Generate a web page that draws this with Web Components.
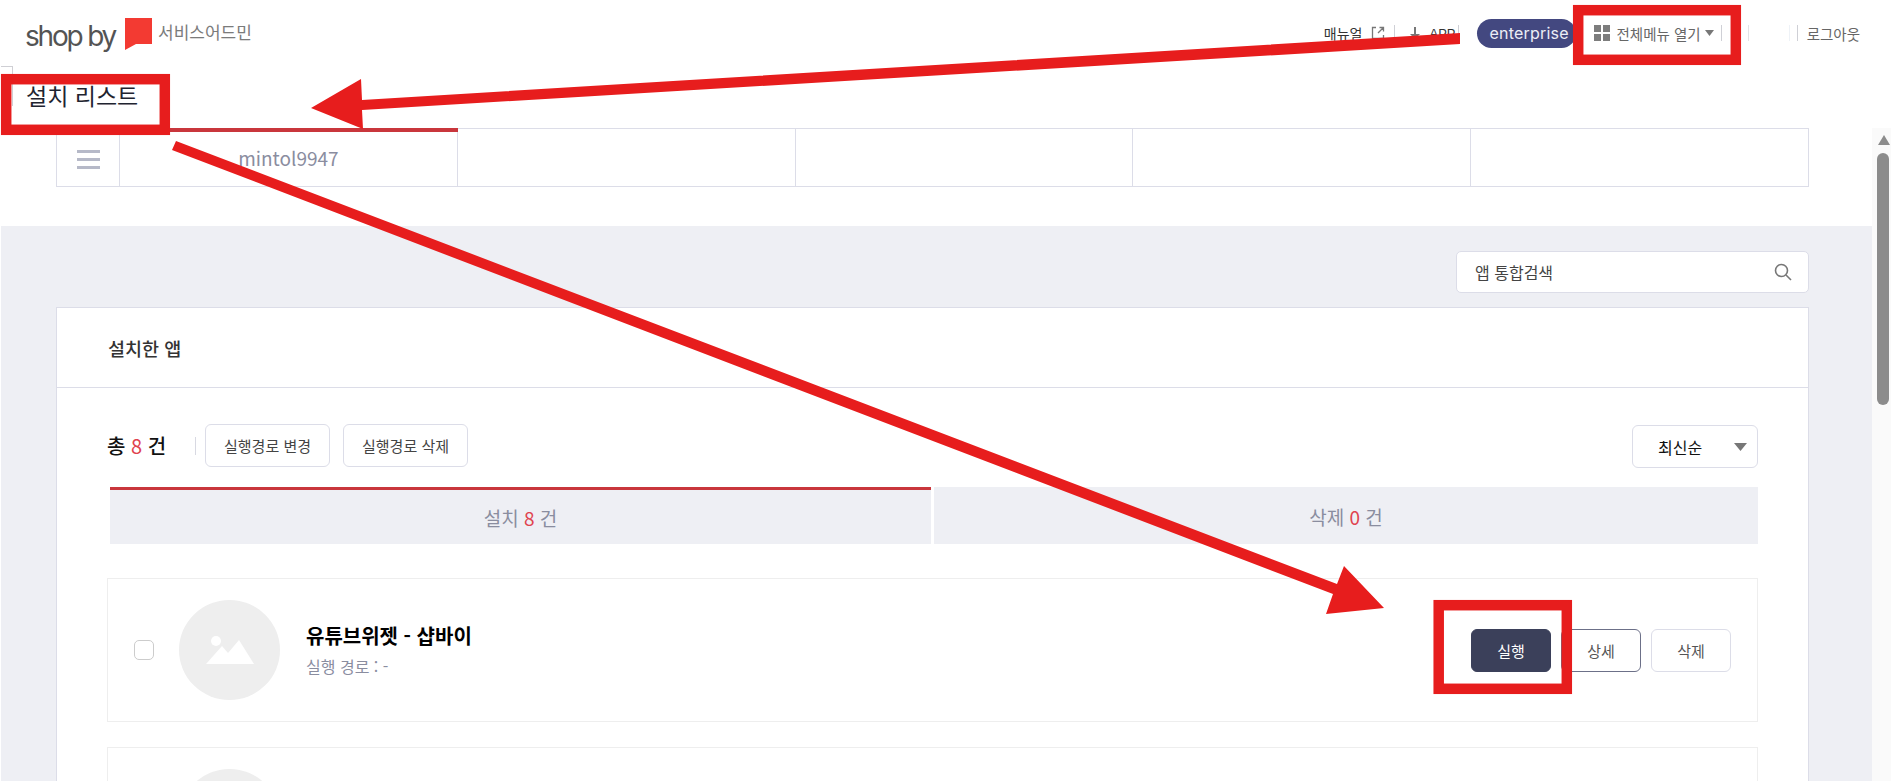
<!DOCTYPE html>
<html lang="ko">
<head>
<meta charset="UTF-8">
<title>설치 리스트</title>
<style>
    html, body { margin: 0; height: 781px; overflow: hidden; background: #fff; }
    body { position: relative; font-family: "Noto Sans CJK KR", "Noto Sans", sans-serif; }
    .page-row { display: flex; height: 653px; }
    .page-main { width: 1872px; }
    .page-back { margin: 39px 0 0 1px; padding: 25px 63px 0 55px; height: 530px; overflow: hidden; background: #eeeff4; }
</style>
</head>
<body>
<script>
    const FONT = '"Noto Sans CJK KR", "Noto Sans", sans-serif';

    class AdminHeader extends HTMLElement {
        constructor() {
            super();
            this.attachShadow({ mode: 'open' }).innerHTML = `
                <style>
                    :host { display: flex; align-items: center; height: 66px; font-family: ${FONT}; font-size: 14.5px; color: #666; }
                    .logo { display: flex; align-items: center; margin-left: 25px; }
                    .word { font: 400 28px/1 Inter, sans-serif; color: #545454; letter-spacing: -2.2px; width: 93px; white-space: nowrap; margin-top: 5px; }
                    .flag { display: block; margin: 2px 0 0 7px; }
                    .service { margin-left: 6px; font-size: 17px; color: #7b7b7b; margin-top: -3px; }
                    nav { display: flex; align-items: center; margin-left: auto; margin-right: 31px; height: 30px; }
                    .sep { width: 1px; height: 16px; background: #cfd0d6; }
                    .pill { width: 99px; height: 29px; border-radius: 15px; background: #434880; color: #eceef6; font: 400 16px/29px Inter, sans-serif; padding-left: 13px; letter-spacing: .2px; box-sizing: border-box; white-space: nowrap; }
                    .dark { color: #333; }
                    svg { display: block; }
                </style>
                <div class="logo">
                    <span class="word">shop by</span>
                    <svg class="flag" width="27" height="32" viewBox="0 0 27 32"><path d="M0 0H27V26H11L0 32Z" fill="#f33a32"/></svg>
                    <span class="service">서비스어드민</span>
                </div>
                <nav>
                    <span class="dark" style="font-size:14px">매뉴얼</span>
                    <svg style="margin-left:8px" width="14" height="14" viewBox="0 0 14 14" fill="none" stroke="#777" stroke-width="1.3"><path d="M5 1.5H1.5V12.5H12.5V9M7 7L12.5 1.5M8.5 1.5H12.5V5.5"/></svg>
                    <span class="sep" style="margin-left:9px"></span>
                    <svg style="margin-left:14px" width="12" height="14" viewBox="0 0 12 14"><path d="M5 1H7V8H11L6 13L1 8H5Z" fill="#777"/></svg>
                    <span class="dark" style="margin-left:9px;font:13px 'Liberation Sans',sans-serif">APP</span>
                    <span class="sep" style="margin-left:2px"></span>
                    <span class="pill" style="margin-left:18px"></span>
                    <svg style="margin-left:18px" width="16" height="16" viewBox="0 0 16 16" fill="#7d7d7d"><rect width="7" height="7"/><rect x="9" width="7" height="7"/><rect y="9" width="7" height="7"/><rect x="9" y="9" width="7" height="7"/></svg>
                    <span style="margin-left:7px">전체메뉴 열기</span>
                    <svg style="margin-left:4px" width="9" height="6" viewBox="0 0 9 6"><path d="M0 0H9L4.5 6Z" fill="#777"/></svg>
                    <span class="sep" style="margin-left:7px"></span>
                    <span class="sep" style="margin-left:26px;background:#e3e3e6"></span>
                    <span class="sep" style="margin-left:40px;background:#eef2f7"></span>
                    <span class="sep" style="margin-left:7px"></span>
                    <span style="margin-left:9px">로그아웃</span>
                </nav>`;
            this.shadowRoot.querySelector('.pill').textContent = 'enterprise';
        }
    }

    class PageTitle extends HTMLElement {
        constructor() {
            super();
            this.attachShadow({ mode: 'open' }).innerHTML = `
                <style>
                    :host { display: block; height: 62px; padding-left: 26px; box-sizing: border-box; font: 400 23px/62px ${FONT}; color: #1f2430; position: relative; }
                    .mark { position: absolute; left: 1px; top: 0; width: 11px; height: 39px; border: 1px solid #cfcfd4; border-left: 0; border-bottom: 0; }
                    h1 { margin: 0; font: inherit; position: relative; top: -2px; }
                </style>
                <span class="mark"></span>
                <h1><slot></slot></h1>`;
        }
    }

    class WorkTabs extends HTMLElement {
        constructor() {
            super();
            this.attachShadow({ mode: 'open' }).innerHTML = `
                <style>
                    :host { display: flex; height: 59px; margin: 0 63px 0 56px; box-sizing: border-box; border: 1px solid #dcdde8; font: 400 19px/1 ${FONT}; color: #8a8d9f; }
                    .menu { width: 62px; display: flex; align-items: center; justify-content: center; border-right: 1px solid #dcdde8; }
                    .menu svg { margin-top: 3px; }
                    .cell { flex: 1; border-right: 1px solid #dcdde8; display: flex; align-items: center; justify-content: center; position: relative; }
                    .cell:last-child { border-right: 0; }
                    .cell.on::before { content: ""; position: absolute; left: -1px; right: -1px; top: -1px; height: 4px; background: #c9363c; }
                </style>
                <div class="menu"><svg width="23" height="19" viewBox="0 0 23 19" fill="#b6b9c8"><rect width="23" height="3"/><rect y="8" width="23" height="3"/><rect y="16" width="23" height="3"/></svg></div>
                <div class="cell on">mintol9947</div>
                <div class="cell"></div>
                <div class="cell"></div>
                <div class="cell"></div>
                <div class="cell"></div>`;
        }
    }

    class SearchBox extends HTMLElement {
        constructor() {
            super();
            this.attachShadow({ mode: 'open' }).innerHTML = `
                <style>
                    :host { display: flex; align-items: center; justify-content: space-between; width: 353px; height: 42px; margin-left: auto; padding: 0 16px 0 18px; box-sizing: border-box; background: #fff; border: 1px solid #dcdde8; border-radius: 5px; font: 400 16px/1 ${FONT}; color: #444; }
                </style>
                <slot></slot>
                <svg width="18" height="18" viewBox="0 0 18 18" fill="none" stroke="#777" stroke-width="1.6"><circle cx="7.5" cy="7.5" r="6"/><path d="M12 12L17 17"/></svg>`;
        }
    }

    class ShopButton extends HTMLElement {
        constructor() {
            super();
            this.attachShadow({ mode: 'open' }).innerHTML = `
                <style>
                    :host { display: flex; align-items: center; justify-content: center; box-sizing: border-box; height: 43px; border: 1px solid #dcdde8; border-radius: 6px; background: #fff; font: 400 15px/1 ${FONT}; color: #555; }
                    :host([kind=dark]) { background: #3b405a; border-color: #3b405a; color: #fff; }
                    :host([kind=line]) { border-color: #6c7088; color: #555; }
                </style>
                <slot></slot>`;
        }
    }

    class StatusTabs extends HTMLElement {
        constructor() {
            super();
            this.attachShadow({ mode: 'open' }).innerHTML = `
                <style>
                    :host { display: flex; gap: 3px; height: 57px; margin-left: 3px; font: 400 19px/1 ${FONT}; color: #8a8d9f; }
                    div { flex: 1; display: flex; align-items: center; justify-content: center; background: #eeeff4; white-space: pre; padding-top: 2px; }
                    .on { flex: none; width: 821px; box-sizing: border-box; padding-top: 0; border-top: 3px solid #c9363c; }
                    b { font-weight: 400; color: #e0434e; }
                </style>
                <div class="on">설치 <b>8</b> 건</div>
                <div>삭제 <b>0</b> 건</div>`;
        }
    }

    class AppItem extends HTMLElement {
        connectedCallback() {
            const name = this.getAttribute('name');
            this.attachShadow({ mode: 'open' }).innerHTML = `
                <style>
                    :host { display: flex; align-items: center; height: 144px; margin-bottom: 25px; box-sizing: border-box; border: 1px solid #eeeeee; font-family: ${FONT}; padding-left: 26px; }
                    .check { width: 20px; height: 20px; box-sizing: border-box; border: 1px solid #cccccc; border-radius: 5px; }
                    .thumb { width: 101px; height: 100px; margin-left: 25px; border-radius: 50%; background: #eeeeee; display: flex; align-items: center; justify-content: center; }
                    .text { margin-left: 26px; }
                    .name { font-size: 20px; font-weight: 700; line-height: 26px; color: #000; margin-top: -1px; }
                    .sub { font-size: 16px; line-height: 22px; margin-top: 6px; color: #8a8d9f; }
                    .actions { display: grid; grid-template-columns: 80px 80px 80px; gap: 10px; margin-left: auto; margin-right: 26px; }
                </style>
                <span class="check"></span>
                <span class="thumb"><svg width="48" height="28" viewBox="0 0 48 28" fill="#fff"><circle cx="10" cy="5" r="5"/><path d="M0 28L16 10L22 17L33 4L48 28Z"/></svg></span>
                ${name ? `
                <div class="text"><div class="name">${name}</div><div class="sub">실행 경로 : -</div></div>
                <div class="actions">
                    <shop-button kind="dark">실행</shop-button>
                    <shop-button kind="line">상세</shop-button>
                    <shop-button>삭제</shop-button>
                </div>` : ''}`;
        }
    }

    class InstalledCard extends HTMLElement {
        constructor() {
            super();
            this.attachShadow({ mode: 'open' }).innerHTML = `
                <style>
                    :host { display: block; margin-top: 14px; background: #fff; border: 1px solid #dcdde8; border-bottom: 0; font-family: ${FONT}; }
                    header { height: 79px; padding-left: 51px; border-bottom: 1px solid #dcdde8; font-size: 18.5px; font-weight: 500; line-height: 81px; color: #333; }
                    .body { padding: 36px 50px 0 50px; }
                    .bar { display: flex; align-items: center; height: 43px; margin-bottom: 20px; }
                    .total { width: 88px; font-size: 20px; font-weight: 500; color: #111; white-space: pre; }
                    .total b { font-weight: 400; color: #e0434e; }
                    .sep { width: 1px; height: 18px; background: #d8d9e2; margin-right: 9px; }
                    shop-button { width: 125px; margin-right: 13px; color: #444; }
                    .sort { display: flex; align-items: center; justify-content: space-between; align-self: flex-start; width: 126px; height: 43px; box-sizing: border-box; margin: 1px 0 0 auto; padding: 0 10px 0 25px; border: 1px solid #dcdde8; border-radius: 6px; font-size: 16px; color: #111; }
                    .items { margin-top: 34px; }
                </style>
                <header>설치한 앱</header>
                <div class="body">
                    <div class="bar">
                        <span class="total">총 <b>8</b> 건</span><span class="sep"></span>
                        <shop-button>실행경로 변경</shop-button>
                        <shop-button>실행경로 삭제</shop-button>
                        <div class="sort">최신순<svg width="13" height="8" viewBox="0 0 13 8"><path d="M0 0H13L6.5 8Z" fill="#777"/></svg></div>
                    </div>
                    <status-tabs></status-tabs>
                    <div class="items"><slot></slot></div>
                </div>`;
        }
    }

    class PageScrollbar extends HTMLElement {
        constructor() {
            super();
            this.attachShadow({ mode: 'open' }).innerHTML = `
                <style>
                    :host { display: block; width: 19px; background: #fafafa; }
                    svg { display: block; margin: 7px 0 0 6px; }
                    div { width: 12px; height: 252px; margin: 8px 0 0 5px; border-radius: 6px; background: #8c8c8c; }
                </style>
                <svg width="12" height="10" viewBox="0 0 12 10"><path d="M6 0L12 10H0Z" fill="#8c8c8c"/></svg>
                <div></div>`;
        }
    }

    // red marks drawn on top of the screenshot
    class AnnotationLayer extends HTMLElement {
        constructor() {
            super();
            this.attachShadow({ mode: 'open' }).innerHTML = `
                <style>
                    :host { position: absolute; left: 0; top: 0; width: 1891px; height: 781px; pointer-events: none; }
                    svg { display: block; }
                </style>
                <svg width="1891" height="781" viewBox="0 0 1891 781" fill="#e71d1d">
                    <g fill="none" stroke="#e71d1d" stroke-width="10.5">
                        <rect x="1578.2" y="10.2" width="157.6" height="49.6"/>
                        <rect x="6.2" y="79.2" width="158.6" height="50.6"/>
                        <rect x="1438.7" y="605.2" width="128.1" height="83.6"/>
                    </g>
                    <path d="M1460 33L362 100L361 79L311 108L363 129L362 110L1460 44Z"/>
                    <path d="M176 141L1337 584L1344 566L1384 608L1326 614L1333 594L172 150Z"/>
                </svg>`;
        }
    }

    customElements.define('admin-header', AdminHeader);
    customElements.define('page-title', PageTitle);
    customElements.define('work-tabs', WorkTabs);
    customElements.define('search-box', SearchBox);
    customElements.define('shop-button', ShopButton);
    customElements.define('status-tabs', StatusTabs);
    customElements.define('app-item', AppItem);
    customElements.define('installed-card', InstalledCard);
    customElements.define('page-scrollbar', PageScrollbar);
    customElements.define('annotation-layer', AnnotationLayer);
</script>

<admin-header></admin-header>
<page-title>설치 리스트</page-title>
<div class="page-row">
    <div class="page-main">
        <work-tabs></work-tabs>
        <div class="page-back">
            <search-box>앱 통합검색</search-box>
            <installed-card>
                <app-item name="유튜브위젯 - 샵바이"></app-item>
                <app-item></app-item>
            </installed-card>
        </div>
    </div>
    <page-scrollbar></page-scrollbar>
</div>
<annotation-layer></annotation-layer>
</body>
</html>
